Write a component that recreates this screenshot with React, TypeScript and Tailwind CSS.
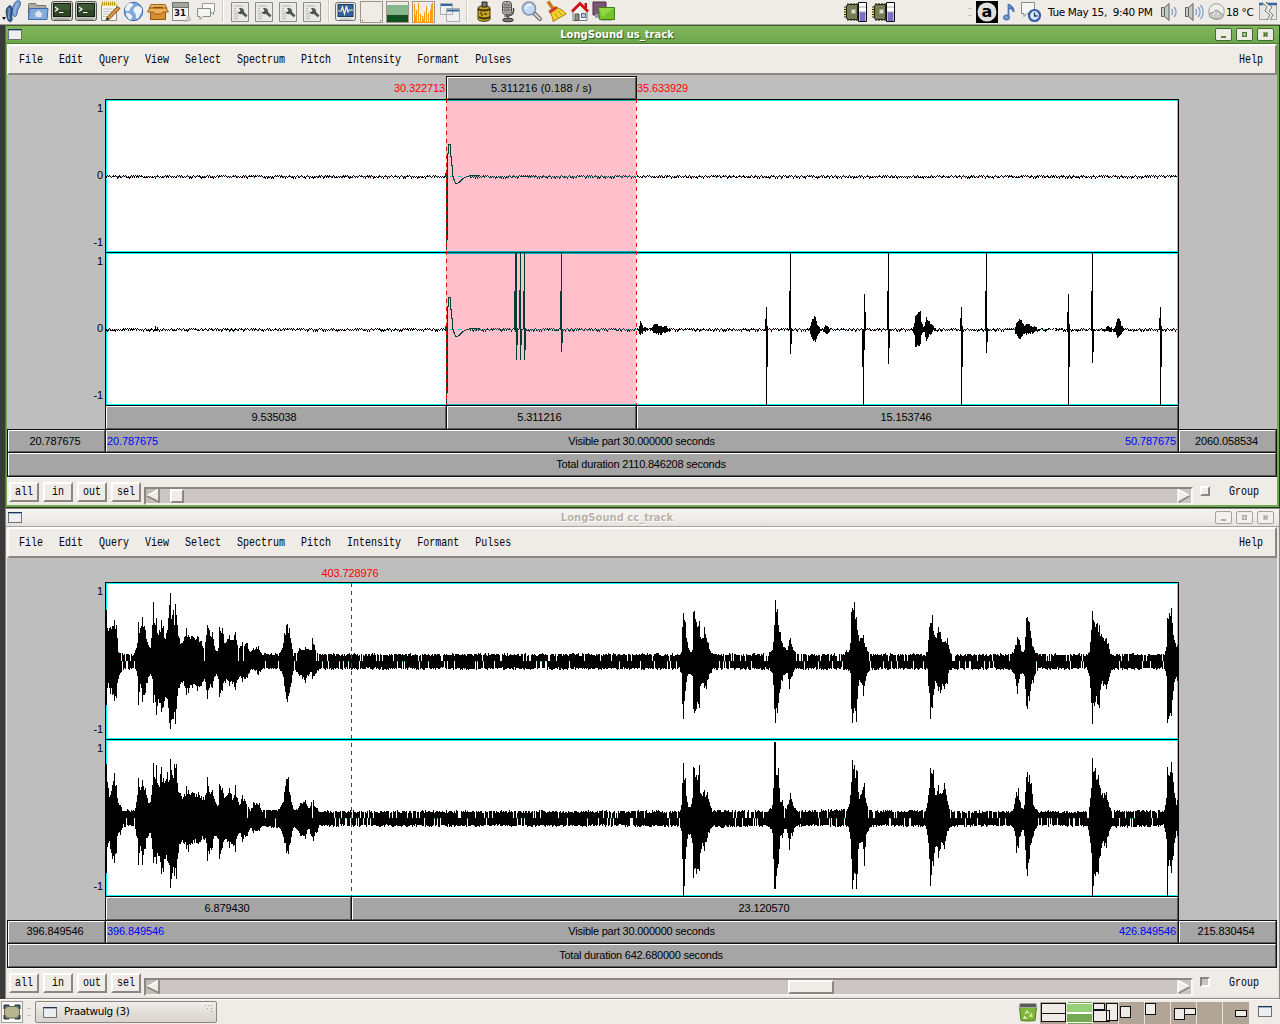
import React from "react";

type Key = [number, number, number];

/* ---------- waveform data: [x, height above axis, depth below axis] ---------- */

const CC_LEFT: Key[] = [
  [106, 51, 43], [107, 33, 26], [109, 33, 26], [110, 34, 32], [112, 35, 33], [114, 41, 39], [116, 36, 36], [117, 23, 21], [118, 9, 17], [121, 9, 10],
  [123, 6, 7], [133, 6, 7], [135, 11, 7], [137, 18, 14], [138, 39, 43], [140, 33, 22], [142, 44, 40], [145, 31, 31], [147, 19, 21],
  [150, 13, 12], [152, 36, 17], [153, 59, 41], [155, 36, 40], [156, 43, 53], [158, 26, 37], [161, 41, 50], [163, 35, 45], [164, 23, 39], [167, 31, 37],
  [169, 56, 61], [170, 68, 67], [171, 42, 58], [172, 46, 57], [173, 51, 57], [174, 36, 50], [175, 57, 62], [177, 36, 34], [179, 23, 26], [182, 18, 21],
  [184, 24, 24], [186, 33, 33], [188, 26, 31], [192, 25, 26], [197, 25, 29], [201, 20, 24], [204, 14, 17], [207, 36, 37], [209, 31, 26],
  [212, 29, 26], [215, 11, 14], [218, 13, 17], [219, 34, 35], [222, 33, 29], [225, 18, 21], [229, 26, 24], [232, 21, 22], [235, 29, 28],
  [238, 13, 17], [242, 19, 20], [247, 18, 16], [250, 8, 9], [253, 13, 7], [258, 15, 13], [262, 7, 7], [278, 6, 7], [282, 13, 12],
  [284, 28, 24], [286, 36, 37], [287, 37, 40], [289, 33, 31], [291, 18, 21], [293, 6, 9], [296, 8, 9], [299, 13, 14], [305, 14, 21],
  [308, 12, 14], [311, 11, 10], [312, 23, 17], [314, 16, 14], [317, 6, 9], [319, 6, 7], [679, 6, 7],
  [681, 9, 11], [682, 34, 42], [683, 48, 57], [685, 39, 29], [687, 19, 14], [690, 9, 12], [692, 11, 14], [693, 49, 47], [694, 50, 51],
  [696, 39, 47], [699, 40, 46], [700, 24, 24], [702, 23, 21], [704, 34, 26], [706, 23, 27], [708, 18, 17], [710, 8, 11], [713, 6, 7],
  [768, 6, 7], [770, 9, 9], [772, 11, 11], [774, 36, 47], [775, 61, 61], [776, 49, 46], [777, 52, 51], [779, 29, 31], [780, 29, 27],
  [782, 18, 19], [785, 13, 12], [787, 11, 11], [789, 21, 27], [790, 23, 17], [792, 14, 14], [795, 8, 7], [797, 6, 7], [844, 6, 7],
  [846, 11, 8], [848, 8, 8], [850, 18, 11], [851, 49, 47], [852, 53, 61], [854, 59, 46], [856, 44, 60], [858, 26, 24], [861, 23, 21],
  [863, 26, 34], [866, 14, 14], [868, 8, 11], [871, 6, 7], [925, 6, 7], [927, 9, 7], [928, 21, 24], [929, 34, 31], [930, 38, 57],
  [932, 46, 46], [934, 26, 27], [936, 23, 21], [938, 34, 29], [940, 29, 31], [943, 19, 24], [944, 19, 27], [947, 23, 22], [948, 16, 11],
  [951, 6, 7], [1010, 6, 7], [1012, 8, 9], [1015, 16, 17], [1017, 24, 32], [1019, 21, 17], [1022, 8, 11], [1024, 11, 14], [1026, 43, 44],
  [1027, 44, 47], [1029, 39, 39], [1031, 23, 22], [1033, 14, 21], [1036, 8, 9], [1038, 6, 7], [1087, 6, 7], [1089, 9, 14], [1090, 19, 26],
  [1092, 50, 62], [1094, 39, 44], [1097, 38, 42], [1099, 36, 46], [1101, 27, 22], [1103, 23, 24], [1106, 23, 27], [1108, 18, 19],
  [1110, 8, 11], [1112, 6, 7], [1164, 6, 7], [1166, 14, 14], [1167, 43, 61], [1169, 48, 54], [1171, 53, 54], [1173, 26, 29], [1175, 18, 17], [1177, 16, 19],
];

const CC_RIGHT: Key[] = [
  [106, 54, 54], [107, 36, 28], [108, 30, 24], [110, 23, 30], [112, 33, 40], [114, 45, 44], [116, 33, 34], [117, 20, 17], [120, 13, 16],
  [123, 7, 7], [134, 7, 7], [136, 16, 17], [137, 23, 19], [138, 40, 46], [140, 28, 27], [142, 38, 46], [145, 30, 30], [147, 20, 19],
  [150, 16, 14], [152, 33, 30], [153, 55, 44], [155, 39, 38], [156, 53, 45], [158, 33, 37], [161, 51, 55], [163, 40, 53], [165, 37, 40],
  [167, 46, 42], [168, 36, 44], [170, 59, 69], [172, 43, 54], [174, 54, 57], [176, 54, 60], [177, 35, 40], [180, 25, 25], [183, 21, 24],
  [186, 32, 30], [188, 28, 33], [192, 26, 25], [198, 26, 25], [203, 21, 20], [206, 25, 24], [207, 41, 42], [209, 26, 35], [212, 28, 29],
  [215, 16, 17], [218, 13, 20], [219, 34, 40], [222, 30, 29], [225, 21, 20], [229, 30, 29], [233, 20, 27], [235, 33, 33], [237, 20, 17],
  [239, 13, 14], [242, 23, 23], [247, 16, 17], [250, 8, 10], [253, 16, 14], [259, 15, 12], [262, 7, 7], [278, 8, 9], [282, 15, 15],
  [284, 26, 24], [286, 39, 34], [288, 41, 35], [290, 23, 24], [292, 13, 12], [295, 7, 9], [300, 15, 17], [305, 18, 20], [308, 10, 10],
  [311, 16, 17], [313, 18, 22], [316, 10, 14], [319, 6, 7], [679, 6, 7],
  [681, 13, 12], [682, 35, 40], [683, 55, 78], [684, 38, 67], [685, 40, 40], [687, 16, 20], [690, 11, 15], [692, 20, 24], [693, 51, 59],
  [694, 50, 50], [696, 43, 55], [698, 43, 50], [699, 53, 52], [700, 25, 34], [703, 26, 27], [704, 28, 32], [707, 26, 19], [709, 16, 14],
  [712, 7, 8], [768, 6, 7], [770, 10, 10], [772, 13, 14], [773, 30, 40], [774, 76, 70], [775, 76, 70], [776, 43, 57], [778, 50, 45],
  [779, 30, 30], [780, 16, 17], [782, 18, 19], [784, 10, 10], [787, 13, 14], [789, 18, 31], [790, 25, 20], [792, 16, 17], [795, 10, 8],
  [798, 6, 7], [846, 8, 7], [848, 11, 8], [850, 23, 20], [851, 36, 40], [852, 58, 70], [854, 53, 54], [856, 48, 70], [857, 47, 55],
  [858, 26, 30], [860, 23, 24], [863, 31, 30], [864, 35, 47], [866, 15, 15], [868, 10, 12], [871, 6, 7], [925, 7, 7], [928, 23, 24],
  [929, 30, 40], [930, 50, 67], [933, 48, 47], [934, 30, 34], [936, 23, 27], [938, 33, 39], [940, 25, 30], [942, 25, 24], [944, 35, 30],
  [946, 23, 17], [948, 13, 12], [952, 6, 7], [1011, 6, 7], [1013, 9, 9], [1015, 20, 17], [1016, 26, 34], [1018, 30, 29], [1020, 16, 17],
  [1022, 10, 11], [1024, 13, 17], [1026, 41, 50], [1027, 46, 57], [1029, 43, 40], [1031, 35, 24], [1033, 13, 17], [1036, 8, 8],
  [1038, 6, 7], [1087, 6, 7], [1089, 11, 17], [1090, 20, 24], [1091, 30, 34], [1092, 60, 78], [1093, 46, 67], [1095, 50, 57],
  [1098, 43, 55], [1100, 30, 37], [1102, 25, 24], [1104, 25, 27], [1106, 26, 29], [1108, 16, 17], [1111, 7, 8], [1163, 6, 7],
  [1166, 20, 20], [1167, 51, 77], [1168, 43, 47], [1170, 46, 47], [1171, 56, 54], [1173, 36, 37], [1175, 20, 19], [1176, 13, 12], [1177, 18, 17],
];

/* [x, top y, bottom y] single-column strokes of the second us_track channel */
const SPIKES: Key[] = [
  [514, 291, 329], [515, 253, 332], [516, 253, 360], [517, 329, 345], [519, 290, 329], [520, 253, 360], [521, 329, 345], [523, 291, 329],
  [524, 253, 360], [525, 329, 350], [560, 291, 329], [561, 253, 352], [562, 329, 343],
  [765, 319, 331], [766, 307, 405], [767, 326, 367], [789, 291, 330], [790, 253, 354], [791, 329, 344], [862, 329, 367], [863, 329, 405],
  [864, 294, 350], [865, 312, 331], [887, 291, 330], [888, 253, 364], [889, 329, 348], [960, 318, 330], [961, 307, 405], [962, 326, 367],
  [985, 291, 330], [986, 253, 353], [987, 329, 342], [1067, 312, 330], [1068, 294, 405], [1069, 324, 367], [1091, 291, 330],
  [1092, 253, 363], [1093, 329, 352], [1159, 318, 330], [1160, 307, 405], [1161, 326, 367],
];

const BLOBS: Key[] = [
  [638, 0, 1], [639, 5, 4], [640, 9, 6], [641, 6, 5], [643, 3, 3], [646, 1, 1], [651, 1, 1], [653, 5, 4], [655, 6, 5], [661, 4, 5],
  [666, 3, 3], [670, 1, 1], [671, 0, 0], [808, 0, 0], [810, 3, 4], [811, 9, 8], [813, 12, 11], [815, 14, 13], [817, 5, 6], [820, 1, 2],
  [822, 1, 1], [826, 5, 5], [830, 1, 1], [831, 0, 0], [912, 0, 0], [914, 7, 6], [915, 15, 17], [918, 17, 17], [920, 19, 16], [921, 8, 6], [923, 3, 3],
  [924, 4, 4], [926, 12, 11], [929, 8, 6], [933, 3, 2], [937, 0, 0], [1014, 0, 0], [1015, 4, 4], [1017, 8, 7], [1020, 11, 11], [1022, 8, 6],
  [1024, 4, 5], [1028, 6, 5], [1031, 3, 3], [1033, 4, 5], [1037, 1, 0], [1101, 0, 0], [1104, 1, 2], [1108, 4, 3], [1112, 1, 2], [1115, 3, 3],
  [1117, 12, 10], [1119, 11, 7], [1121, 5, 4], [1124, 0, 0],
];

/* ---------- helpers ---------- */

function makeRandom(seed: number) {
  let s = seed;
  return () => {
    s = (s * 1664525 + 1013904223) % 4294967296;
    return s / 4294967296;
  };
}

function sample(keys: Key[], x: number): [number, number] {
  if (x < keys[0][0] || x > keys[keys.length - 1][0]) return [0, 0];
  let i = 0;
  while (i < keys.length - 2 && keys[i + 1][0] <= x) i++;
  const a = keys[i];
  const b = keys[i + 1];
  const t = (x - a[0]) / (b[0] - a[0]);
  return [a[1] + (b[1] - a[1]) * t, a[2] + (b[2] - a[2]) * t];
}

function bar(x: number, top: number, bottom: number) {
  return `M${x} ${top}h1V${bottom}h-1z`;
}

function densePath(keys: Key[], mid: number, seed: number) {
  const rnd = makeRandom(seed);
  const peaks = new Set(keys.map((k) => k[0]));
  let d = "";
  for (let x = 106; x <= 1177; x++) {
    const [u, w] = sample(keys, x);
    const quiet = u < 9;
    const dip = peaks.has(x) ? 0 : 0.22;
    let up = u + (quiet ? rnd() * 2.6 - 0.9 : -rnd() * u * dip);
    let down = w + (quiet ? rnd() * 2.6 - 1.6 : -rnd() * w * dip);
    const r = rnd();
    if (quiet) {
      if (r < 0.09) up = 0;
      else if (r < 0.18) down = -1;
    } else if (u < 20 && r < 0.06) up = 0;
    d += bar(x, Math.round(mid - up), Math.round(mid + 1 + down));
  }
  return d;
}

function hum(from: number, to: number, mid: number, seed: number) {
  const rnd = makeRandom(seed);
  let d = "";
  for (let x = from; x < to; x++) {
    const tall = rnd() < 0.36;
    const y = x % 2 === 0 ? mid : mid + (rnd() < 0.55 ? 1 : -1);
    d += bar(x, y, y + (tall ? 2 : 1));
  }
  return d;
}

const inPink = (x: number) => x >= 447 && x < 636;
const spikeData = (pink: boolean) => SPIKES.filter(([x]) => inPink(x) === pink).map(([x, a, b]) => bar(x, a, b)).join("");

function blobData() {
  const rnd = makeRandom(9);
  let d = "";
  for (let x = 638; x < 1125; x++) {
    const [u, w] = sample(BLOBS, x);
    if (u > 0.6 || w > 0.6) d += bar(x, Math.round(329 - u + rnd() * 2), Math.round(330 + w - rnd() * 2));
  }
  return d;
}

const US = {
  left1: hum(106, 446, 176, 3), pink1: hum(470, 636, 176, 5), right1: hum(637, 1177, 176, 7),
  left2: hum(106, 446, 329, 11), pink2: hum(470, 636, 329, 13), right2: hum(637, 1177, 329, 17),
};

function Transient({ dy }: { dy: number }) {
  return (
    <g transform={`translate(0 ${dy})`}>
      <path d="M445 173h1v4h-1zM446 170h1V250h-1zM447 165h1V240h-1z" fill="#003f35" />
      <path
        d="M447.5 168V158L448.5 150L449 144.5H450L450.5 150L451.5 163L452.5 168L453 177L455.5 183.5H457.5L460.5 181L464.5 177.5L470.5 175.5H480"
        fill="none" stroke="#003f35" strokeWidth="1.1"
      />
    </g>
  );
}

function UsPlot() {
  return (
    <svg className="block h-[307px] w-[1074px]" viewBox="105 99 1074 307" shapeRendering="crispEdges">
      <rect x="105" y="99" width="1074" height="307" fill="#fff" />
      <rect x="446" y="100" width="190" height="305" fill="#ffc0cb" />
      <path d="M106 100.5H1178M106 251.5H1178M106 253.5H1178M106 404.5H1178M106.5 100V405M1177.5 100V405" stroke="#00ffff" fill="none" />
      <path d="M447 100.5H636M447 251.5H636M447 253.5H636M447 404.5H636" stroke="#00b8bd" fill="none" />
      <path d="M106 176.5H1177M106 329.5H1177" stroke="#00d8d8" strokeDasharray="4 4" fill="none" />
      <path d="M105.5 99V406M1178.5 99V406M105 99.5H1179M105 252.5H1179M105 405.5H1179" stroke="#000" fill="none" />
      <path d="M447 252.5H636" stroke="#00403f" />
      <path d={US.left1 + US.right1 + US.left2 + US.right2 + spikeData(false) + blobData()} fill="#000" />
      <path d={US.pink1 + US.pink2 + spikeData(true)} fill="#003f35" />
      <path d="M155 326h1v5h-1zM157 327h1v4h-1z" fill="#000" />
      <Transient dy={0} />
      <Transient dy={153} />
      <path d="M446.5 99V405M636.5 99V405" stroke="#ff0000" strokeDasharray="4 4" fill="none" />
    </svg>
  );
}

function CcPlot() {
  return (
    <svg className="block h-[315px] w-[1074px]" viewBox="105 582 1074 315" shapeRendering="crispEdges">
      <rect x="105" y="582" width="1074" height="315" fill="#fff" />
      <path d="M106 583.5H1178M106 738.5H1178M106 740.5H1178M106 895.5H1178M106.5 583V896M1177.5 583V896" stroke="#00ffff" fill="none" />
      <path d="M106 661.5H1177M106 818.5H1177" stroke="#00e0e0" strokeDasharray="4 4" fill="none" />
      <path d={densePath(CC_LEFT, 661, 21)} fill="#000" />
      <path d={densePath(CC_RIGHT, 818, 42)} fill="#000" />
      <path d="M105.5 582V897M1178.5 582V897M105 582.5H1179M105 739.5H1179M105 896.5H1179" stroke="#000" fill="none" />
      <path d="M351.5 583V896" stroke="#d40000" strokeDasharray="4 4" fill="none" />
    </svg>
  );
}

/* ---------- Motif widgets ---------- */

const MONO = "font-['Liberation_Mono',monospace] text-[10px] leading-[12px] text-black";
const SANS = "font-['Liberation_Sans',sans-serif] text-[11px] leading-[13px] tracking-[-0.1px]";

function Mono({ children }: { children: React.ReactNode }) {
  return <span className={`${MONO} inline-block scale-y-[1.28] whitespace-pre`}>{children}</span>;
}

function Cell({ className = "", children }: { className?: string; children?: React.ReactNode }) {
  return (
    <div className={`flex border-r border-[#101010] ${className}`}>
      <div className={`flex flex-1 items-center justify-center border border-t-white border-l-white border-r-[#5a5a5a] border-b-[#5a5a5a] bg-[#a5a5a5] whitespace-nowrap ${SANS}`}>
        {children}
      </div>
    </div>
  );
}

function MenuBar() {
  const items = ["File", "Edit", "Query", "View", "Select", "Spectrum", "Pitch", "Intensity", "Formant", "Pulses"];
  return (
    <div className="flex h-[31px] items-center justify-between border-2 border-t-white border-r-[#8b8682] border-b-[#8b8682] border-l-[#fbfaf9] bg-[#efebe7] pt-[1px] pr-3 pl-[10px]">
      <div className="flex gap-4">
        {items.map((t) => <Mono key={t}>{t}</Mono>)}
      </div>
      <Mono>Help</Mono>
    </div>
  );
}

function PushButton({ label }: { label: string }) {
  return (
    <div className="flex h-5 w-[30px] items-center justify-center border-2 border-t-white border-r-[#8b8682] border-b-[#8b8682] border-l-white bg-[#efebe7]">
      <Mono>{label}</Mono>
    </div>
  );
}

function Footer({ thumbLead, thumbWidth, checked }: { thumbLead: string; thumbWidth: string; checked: boolean }) {
  return (
    <div className="flex h-7 border-t border-white bg-[#efebe7] pl-[1px]">
      <div className="mt-1 flex gap-1 pl-[1px]">
        <PushButton label="all" /><PushButton label="in" /><PushButton label="out" /><PushButton label="sel" />
      </div>
      <div className="mt-[9px] ml-[3px] flex h-[18px] w-[1049px] border-2 border-t-[#8b8682] border-r-[#fbfaf9] border-b-[#f4f1ee] border-l-[#8b8682] bg-[#cbc6c3]">
        <svg className="h-[14px] w-[14px]" viewBox="0 0 14 14">
          <path d="M0 0h14v14H0z" fill="#c2bdba" />
          <path d="M12.5 0V13.5L1 7z" fill="#efebe7" />
          <path d="M12.5 .5L1 7" stroke="#fff" strokeWidth="1.5" />
          <path d="M1 7l12 6V0" stroke="#8b8682" strokeWidth="1.8" fill="none" />
        </svg>
        <div className={`${thumbLead} ${thumbWidth} h-[14px] border-2 border-t-white border-r-[#8b8682] border-b-[#8b8682] border-l-white bg-[#efebe7]`} />
        <svg className="ml-auto h-[14px] w-[14px]" viewBox="0 0 14 14">
          <path d="M1 0V13.5L12.5 7z" fill="#efebe7" />
          <path d="M1.2 14V.8L12 6.5" stroke="#fff" strokeWidth="1.8" fill="none" />
          <path d="M12.5 7L1.5 13.2" stroke="#8b8682" strokeWidth="1.8" />
        </svg>
      </div>
      <div className={checked
        ? "mt-2 ml-[7px] h-[10px] w-[10px] border-2 border-t-[#8b8682] border-r-white border-b-white border-l-[#8b8682] bg-[#cbc6c3]"
        : "mt-2 ml-[7px] h-[10px] w-[10px] border-2 border-t-white border-r-[#8b8682] border-b-[#8b8682] border-l-white bg-[#efebe7]"} />
      <div className="mt-2 ml-[19px] flex items-start"><Mono>Group</Mono></div>
    </div>
  );
}

function TitleButtons({ active }: { active: boolean }) {
  const box = active
    ? "h-[13px] w-[17px] rounded-[2px] border border-[#3f6b2d] bg-[#efebe7]"
    : "h-[13px] w-[17px] rounded-[2px] border border-[#a8a29c] bg-[#f3f0ed]";
  const ink = active ? "#50803c" : "#b3aca5";
  return (
    <div className="flex gap-1">
      <svg className={box} viewBox="0 0 15 11"><path d="M5 7h5v2H5z" fill={ink} /></svg>
      <svg className={box} viewBox="0 0 15 11"><path d="M5.75 3.75h3.5v3.5h-3.5z" fill="none" stroke={ink} strokeWidth="1.5" /></svg>
      <svg className={box} viewBox="0 0 15 11"><path d="M5.5 3.5l4 4m0-4l-4 4" stroke={ink} strokeWidth="2" /></svg>
    </div>
  );
}

function MiniWindow({ className = "" }: { className?: string }) {
  return (
    <svg className={`block h-[11px] w-[14px] ${className}`} viewBox="0 0 14 11" shapeRendering="crispEdges">
      <rect x=".5" y=".5" width="13" height="10" fill="#eceef0" stroke="#6d7278" />
      <path d="M0 .5h14" stroke="#20344e" />
      <path d="M1 1.5h12" stroke="#9bb0ca" />
    </svg>
  );
}

function TitleBar({ title, active }: { title: string; active: boolean }) {
  return (
    <div className={active
      ? "relative flex h-[19px] items-center justify-between border-t border-b border-t-[#3c5f2c] border-b-[#4b8033] bg-linear-to-b from-[#7fb65c] via-[#79b056] to-[#6da34c] pr-[5px] pl-[2px]"
      : "relative flex h-[19px] items-center justify-between border-t border-b border-t-[#8b8682] border-b-[#a8a29c] bg-linear-to-b from-[#f5f3f1] via-[#f1eeeb] to-[#e6e0da] pr-[5px] pl-[2px]"}>
      <MiniWindow />
      <span className={active
        ? "absolute top-[1px] right-[51px] left-0 text-center font-['DejaVu_Sans',sans-serif] text-[10px] leading-[15px] font-bold text-white [text-shadow:1px_1px_1px_#2f5620]"
        : "absolute top-[1px] right-[51px] left-0 text-center font-['DejaVu_Sans',sans-serif] text-[10px] leading-[15px] font-bold text-[#b9b2aa] [text-shadow:1px_1px_0_#fff]"}>
        {title}
      </span>
      <TitleButtons active={active} />
    </div>
  );
}

function UsWindow() {
  return (
    <section className="h-[483px] w-[1275px] border-r border-b border-l border-l-[#4b8033] border-r-[#1f3a14] border-b-[#1f3a14] bg-[#73a952]">
      <TitleBar title="LongSound us_track" active />
      <div className="ml-[1px] flex w-[1270px] flex-col bg-[#bebebe]">
        <MenuBar />
        <div className={`flex h-6 items-end ${SANS}`}>
          <div className="w-[438px] pb-[4px] text-right text-[#ff0000]">30.322713</div>
          <div className="ml-[1px] flex h-[23px] w-[191px] border-t border-l border-[#101010]">
            <Cell className="flex-1"><span className="tracking-[0.16px]">5.311216 (0.188 / s)</span></Cell>
          </div>
          <div className="pb-[4px] text-[#ff0000]">35.633929</div>
        </div>
        <div className="flex h-[307px]">
          <div className={`flex w-[98px] flex-col pr-[2px] text-right ${SANS}`}>
            <span className="mt-[3px]">1</span>
            <span className="mt-[54px]">0</span>
            <span className="mt-[54px]">-1</span>
            <span className="mt-[6px]">1</span>
            <span className="mt-[54px]">0</span>
            <span className="mt-[54px]">-1</span>
          </div>
          <UsPlot />
        </div>
        <div className="ml-[98px] flex h-[23px] w-[1074px] border-l border-[#101010]">
          <Cell className="w-[341px]"><span className="pr-1">9.535038</span></Cell>
          <Cell className="w-[190px]"><span className="pr-1">5.311216</span></Cell>
          <Cell className="flex-1"><span className="pr-[3px]">15.153746</span></Cell>
        </div>
        <div className="flex h-6 border-y border-l border-[#101010]">
          <Cell className="w-[98px]"><span className="pr-[3px]">20.787675</span></Cell>
          <Cell className="w-[1073px]">
            <div className="grid flex-1 grid-cols-3 pr-[1px]">
              <span className="text-[#0000ff]">20.787675</span>
              <span className="text-center tracking-[-0.23px]">Visible part 30.000000 seconds</span>
              <span className="text-right text-[#0000ff]">50.787675</span>
            </div>
          </Cell>
          <Cell className="flex-1"><span className="pr-[2px]">2060.058534</span></Cell>
        </div>
        <div className="flex h-6 border-b border-l border-[#101010]">
          <Cell className="flex-1"><span className="pr-[2px] tracking-[-0.21px]">Total duration 2110.846208 seconds</span></Cell>
        </div>
        <Footer thumbLead="ml-[10px]" thumbWidth="w-[14px]" checked={false} />
      </div>
    </section>
  );
}

function CcWindow() {
  return (
    <section className="h-[491px] w-[1275px] border-r border-b border-l border-[#8b8682] bg-[#e9e5e1]">
      <TitleBar title="LongSound cc_track" active={false} />
      <div className="ml-[1px] flex w-[1270px] flex-col bg-[#bebebe]">
        <MenuBar />
        <div className={`flex h-6 items-end ${SANS}`}>
          <div className="w-[686px] pb-[2px] text-center text-[#ff0000]">403.728976</div>
        </div>
        <div className="flex h-[315px]">
          <div className={`flex w-[98px] flex-col pr-[2px] text-right ${SANS}`}>
            <span className="mt-[3px]">1</span>
            <span className="mt-[125px]">-1</span>
            <span className="mt-[6px]">1</span>
            <span className="mt-[125px]">-1</span>
          </div>
          <CcPlot />
        </div>
        <div className="ml-[98px] flex h-[23px] w-[1074px] border-l border-[#101010]">
          <Cell className="w-[246px]"><span className="pr-[3px]">6.879430</span></Cell>
          <Cell className="flex-1"><span className="pr-[2px]">23.120570</span></Cell>
        </div>
        <div className="flex h-6 border-y border-l border-[#101010]">
          <Cell className="w-[98px]"><span className="pr-[3px] pb-[2px]">396.849546</span></Cell>
          <Cell className="w-[1073px]">
            <div className="grid flex-1 grid-cols-3 pr-[1px] pb-[2px]">
              <span className="text-[#0000ff]">396.849546</span>
              <span className="text-center tracking-[-0.23px]">Visible part 30.000000 seconds</span>
              <span className="text-right text-[#0000ff]">426.849546</span>
            </div>
          </Cell>
          <Cell className="flex-1"><span className="pr-[3px] pb-[2px]">215.830454</span></Cell>
        </div>
        <div className="flex h-6 border-b border-l border-[#101010]">
          <Cell className="flex-1"><span className="pr-[2px] tracking-[-0.23px]">Total duration 642.680000 seconds</span></Cell>
        </div>
        <Footer thumbLead="ml-[628px]" thumbWidth="w-[46px]" checked />
      </div>
    </section>
  );
}

/* ---------- desktop panel icons ---------- */

function Icon({ children, w = 24 }: { children: React.ReactNode; w?: number }) {
  return (
    <svg className="block h-6 shrink-0" width={w} viewBox={`0 0 ${w} 24`}>
      {children}
    </svg>
  );
}

function Divider() {
  return <div className="mx-1 h-[22px] w-[2px] shrink-0 border-r border-l border-r-white border-l-[#d0cac4]" />;
}

const Foot = () => (
  <Icon>
    <path d="M0 17h4l-2 3z" fill="#111" />
    <path d="M14 2c4-2 5 0 4 4-1 3-3 4-3 8 0 3-3 4-4 2-2-4 0-11 3-14z" fill="#7ba3d6" stroke="#3a6299" transform="translate(0 -.5)" />
    <path d="M5 8c3-4 5-2 5 1 0 4-1 6 0 9 1 4-3 5-4 2C5 17 3 12 5 8z" fill="#345e94" stroke="#24466f" />
    <path d="M7 8c1 3-1 6 0 11M15 4c-1 3-3 6-2 10" stroke="#a5c2e6" fill="none" />
  </Icon>
);
const Folder = () => (
  <Icon>
    <path d="M2.5 19V4.500q0-1 1-1h6l1 2h8.500q1 0 1 1V19z" fill="#a9aca7" stroke="#6d706b" />
    <path d="M3.500 8.500H22l-1 11H2.500z" fill="#83abdc" stroke="#3c6ca8" />
    <path d="M8 14.500L12.500 10l4.500 4.500h-1.500V17h-6v-2.500z" fill="#dfe6ee" />
  </Icon>
);
const Terminal = () => (
  <Icon>
    <rect x="1.500" y="1.500" width="21" height="19" rx="2" fill="#c9cac7" stroke="#555753" />
    <rect x="3.500" y="3.500" width="17" height="13" fill="#2c4423" stroke="#141c10" />
    <path d="M4 5h16M4 7h16M4 9h16" stroke="#4d7040" />
    <path d="M5 7l3 2.200-3 2.200M9 12.500h4.500" stroke="#fff" strokeWidth="1.200" fill="none" />
    <path d="M4 19h15" stroke="#888a85" />
  </Icon>
);
const Notes = () => (
  <Icon>
    <path d="M3.500 3.500h15v17h-15z" fill="#f5f5f2" stroke="#8a8d87" />
    <path d="M5 9h12M5 11.500h12M5 14h10M5 16.500h10" stroke="#c1c3be" />
    <path d="M3 3h16v2.500H3z" fill="#e4d263" />
    <path d="M4.500 1.500v4M6.500 1.500v4M8.500 1.500v4M10.500 1.500v4M12.500 1.500v4M14.500 1.500v4M16.500 1.500v4" stroke="#c09c14" />
    <path d="M9 17.500L19.500 6.500l2.500 2L11.500 19l-3.500 1z" fill="#e09a3c" stroke="#7a4b11" />
    <path d="M8 20l1.300-2.800 2 2z" fill="#222" />
  </Icon>
);
const Globe = () => (
  <Icon>
    <circle cx="11.500" cy="11.500" r="9.200" fill="#7fa8dc" stroke="#3a68a6" />
    <path d="M5 5c3-3 6-2 6 0s-3 2-3 4-3 3-5 1c0-2 1-4 2-5zM12 8c3-3 7-2 8 1 0 4-2 5-3 8-2 3-4 1-3-2 0-2-4-3-2-7zM4 13c3-1 5 2 6 3s-1 3-1 4c-3-1-5-4-5-7z" fill="#eef4fb" />
  </Icon>
);
const Box = () => (
  <Icon>
    <path d="M5 4.500h14l2 4H3z" fill="#f0b765" stroke="#9c6010" />
    <path d="M4.500 11h15v8.500h-15z" fill="#d88f30" stroke="#8f560b" />
    <path d="M1.500 12L4 8h16l2.500 4h-6l-1 2H8.500l-1-2z" fill="#efb25a" stroke="#9c6010" />
    <path d="M7 7.500h10" stroke="#8a5208" strokeWidth="1.500" />
  </Icon>
);
const Calendar = () => (
  <Icon>
    <path d="M2.500 2.500h16v18h-16z" fill="#f3f3f1" stroke="#888a85" />
    <path d="M2.500 2.500h16v5h-16z" fill="#a3a5a0" stroke="#6d706b" />
    <path d="M18.500 15c1 4 3 4 2 5-2 1-5 1-7 1 3-1 4-2 4-4z" fill="#d5d6d3" stroke="#999" strokeWidth=".7" />
    <text x="4" y="15.500" fontFamily="DejaVu Sans" fontWeight="bold" fontSize="8" fill="#111" textLength="12" lengthAdjust="spacingAndGlyphs">31</text>
  </Icon>
);
const Chat = () => (
  <Icon>
    <path d="M8.500 3.500h12v8h-1v3l-3-3h-8z" fill="#fafafa" stroke="#9a9c98" />
    <path d="M3.500 8.500h13v8H9l-3 3v-3H3.500z" fill="#f4f4f3" stroke="#888a85" />
  </Icon>
);
const Wrench = () => (
  <Icon>
    <path d="M3.500 2.500h17v19h-17z" fill="#e9eae8" stroke="#8b8d89" />
    <path d="M6 6h9M6 8.500h2M6 11h2M6 13.500h5M6 16h5M6 18.500h4" stroke="#b3b5b1" />
    <path d="M11 8.500c2-1 5 0 5 2.500 0 1 0 1 1 2l2.500 2.500-1.800 1.800L14 14c-2 .5-4-.5-4.500-2.500l2 .5 1-1.500z" fill="#50534e" />
  </Icon>
);
const SystemMonitor = () => (
  <Icon>
    <rect x="1.500" y="2.500" width="20" height="18" rx="2" fill="#e9e9e6" stroke="#6d706b" />
    <rect x="4" y="4.500" width="15" height="12" fill="#33609c" stroke="#1d3d69" />
    <path d="M4 11h3l1.500-4 2 7 2-8 1.500 6 1.500-2h3.500" stroke="#f5f8c8" strokeWidth="1.200" fill="none" />
    <path d="M6 19h11" stroke="#b0b2ad" />
  </Icon>
);
const Applets = () => (
  <Icon w={78}>
    <g shapeRendering="crispEdges">
      <path d="M2.500 1.500h22v21h-22zM28.500 1.500h22v21h-22zM54.500 1.500h22v21h-22z" fill="#efebe7" stroke="#a19488" />
      <path d="M4 20h1v1H4zM22 20h1v1h-1z" fill="#0a6a1f" />
      <path d="M29 2h21v3H29z" fill="#efebe7" />
      <path d="M29 5h21v10H29z" fill="#86b78a" />
      <path d="M29 15h21v7H29z" fill="#10501c" />
      <path d="M56.500 4V22M58.500 10V22M60.500 3V22M62.500 14V22M64.500 16V22M66.500 12V22M68.500 6V22M70.500 13V22M72.500 10V22M74.500 3V22M73.500 4V22M57.500 15V22M65.500 19V22" stroke="#ff9c0a" />
      <path d="M55 22h21" stroke="#ff9c0a" />
    </g>
  </Icon>
);
const WindowsIcon = () => (
  <Icon>
    <path d="M2.500 3.500h12v11h-12zM8.500 8.500h13v13h-13z" fill="#eff1f3" stroke="#a8abb0" />
    <path d="M3 5h11M9 10.500h12" stroke="#3565a0" strokeWidth="2" />
  </Icon>
);
const Can = () => (
  <Icon>
    <path d="M6 8c0-3 12-3 12 0v11c0 3-12 3-12 0z" fill="#c9a520" stroke="#3c3205" />
    <path d="M6 9c3 2 9 2 12 0M7 17c3 2 8 2 11 0" stroke="#3c3205" strokeWidth="2" fill="none" />
    <path d="M8 13h2m2 1h3M9 15h2" stroke="#5d4b06" strokeWidth="1.500" />
    <path d="M10 2h5v5h-5z" fill="#777" stroke="#222" />
  </Icon>
);
const Mic = () => (
  <Icon>
    <rect x="6.500" y="1.500" width="9" height="13" rx="3" fill="#c5c7c3" stroke="#454743" />
    <path d="M7 5h8M7 7.500h8M7 10h8M11 2v12M9 3v10M13 3v10" stroke="#666863" strokeWidth=".9" />
    <path d="M17.500 8c1 9-6 8-9 8M12 16v4" stroke="#454743" strokeWidth="1.500" fill="none" />
    <ellipse cx="12" cy="20" rx="5.500" ry="1.800" fill="#777" stroke="#333" />
  </Icon>
);
const Magnifier = () => (
  <Icon>
    <path d="M14 13l6 6" stroke="#666" strokeWidth="4" strokeLinecap="round" />
    <path d="M15 14l5 5" stroke="#d5d6d3" strokeWidth="2" strokeLinecap="round" />
    <circle cx="9" cy="8.500" r="6.500" fill="#c4d9f2" stroke="#7f93ab" strokeWidth="1.500" />
    <path d="M6 9c0-3 2-4 5-4" stroke="#fff" strokeWidth="1.500" fill="none" />
  </Icon>
);
const Broom = () => (
  <Icon>
    <path d="M4 1.500l5 7" stroke="#c67b1b" strokeWidth="3.500" />
    <path d="M5 11l7-4c5 2 8 4 10 7L9 21.500c0-3-1-6-4-10.500z" fill="#f2d02e" stroke="#a8830a" />
    <path d="M4.500 11l7.500-5 1.500 2.500-7 5z" fill="#cf3b27" />
    <path d="M11 13l3 5M14 11l4 4" stroke="#b99312" />
  </Icon>
);
const House = () => (
  <Icon>
    <path d="M5 11v9.500h14V11l-7-6z" fill="#f3f3f1" stroke="#777" />
    <path d="M16.500 3h2.500v5h-2.500z" fill="#c31414" />
    <path d="M4 11.500L12 3.500l8 8" stroke="#d01818" strokeWidth="3" fill="none" />
    <path d="M7 14h4v6.500H7z" fill="#8a8c88" stroke="#555" />
    <path d="M13.500 13.500h4v4h-4z" fill="#b9cfe8" stroke="#56657a" />
  </Icon>
);
const Displays = () => (
  <Icon>
    <path d="M1 2h13v13H1z" fill="#7b5478" stroke="#472c45" />
    <path d="M3 14h6v4H3z" fill="#9a9c98" />
    <path d="M6.500 7.500h16v12h-15z" fill="#73c42f" stroke="#3f7e12" />
    <path d="M7 8l15 0-12 9z" fill="#9be052" opacity=".7" />
    <path d="M9 20.500h11" stroke="#bbb" />
  </Icon>
);
const Cpu = () => (
  <Icon>
    <path d="M0 7.500h3v9H0z" fill="#e6e08a" />
    <path d="M0 7h3M0 9.500h3M0 12h3M0 14.500h3M0 17h3M4 3v18M7 3v18M10 3v18M13 3v18" stroke="#2e2e14" strokeWidth="1.200" />
    <path d="M2.500 6.500q0-2 2-2h9v15h-9q-2 0-2-2z" fill="#767b58" stroke="#24260f" />
    <path d="M7.500 9.500h4v4h-4z" fill="#d9dbcf" stroke="#a5a88f" />
    <path d="M14.500 2.500h8v19h-8z" fill="#fff" stroke="#111" />
    <path d="M15.500 12h6v9h-6z" fill="#7a70c6" />
    <path d="M15 7h7M15 12h7" stroke="#aaa" />
  </Icon>
);
const Alpha = () => (
  <Icon>
    <path d="M1 1h22v22H1z" fill="#000" />
    <circle cx="12" cy="12" r="9.500" fill="#e0e0e0" />
    <text x="12" y="17" textAnchor="middle" fontFamily="DejaVu Sans" fontWeight="bold" fontSize="16" fill="#000">a</text>
  </Icon>
);
const Note = () => (
  <Icon w={16}>
    <path d="M6.500 4v13M6.500 4c2 3 6 3 5 8 0-2-2-4-5-4" stroke="#4b76b1" strokeWidth="1.800" fill="none" />
    <ellipse cx="4.500" cy="17.500" rx="3" ry="2.500" fill="#6e98d0" stroke="#3c659e" />
  </Icon>
);
const ChatClock = () => (
  <Icon>
    <path d="M3.500 2.500h13v11H9l-3 3v-3H3.500z" fill="#f6f6f5" stroke="#888a85" />
    <circle cx="16.500" cy="15.500" r="5.500" fill="#dbe7f6" stroke="#2f5fa5" strokeWidth="2.200" />
    <path d="M16.500 12.500v3.500h3" stroke="#1d3d69" strokeWidth="1.300" fill="none" />
  </Icon>
);
const Speaker = ({ loud = false }: { loud?: boolean }) => (
  <Icon>
    <path d="M5.500 7.500h3l4.500-4v17l-4.500-4h-3z" fill="#c7c9c5" stroke="#5d605b" />
    <path d="M8.500 8v8" stroke="#5d605b" />
    <path d="M15.500 9c1.500 2 1.500 4 0 6M18 7c2.500 3 2.500 7 0 10" stroke="#7ea0cf" strokeWidth="1.300" fill="none" />
    {loud && <path d="M20.500 5c3.500 4 3.500 10 0 14" stroke="#7ea0cf" strokeWidth="1.300" fill="none" />}
  </Icon>
);
const Weather = () => (
  <Icon w={20}>
    <circle cx="10.500" cy="11.500" r="7.800" fill="#eeeeed" stroke="#9b9d99" />
    <path d="M4 17c-2-3 1-5 3-4 2-4 6-3 7 0 3 0 4 3 2 5-3 2-9 1-12-1z" fill="#c8cac7" stroke="#8f918d" />
    <path d="M7 15l2-3M11 15l2-2" stroke="#fff" />
  </Icon>
);
const Broken = () => (
  <Icon w={20}>
    <path d="M1.500 3.500h17v16h-17z" fill="#e6e7e5" stroke="#9fa19e" />
    <path d="M1 4h18" stroke="#3565a0" strokeWidth="2.500" />
    <path d="M5 2l6 6-4 3 6 4-2 5" stroke="#efebe7" strokeWidth="3" fill="none" />
    <path d="M4 2l5 5-2 4 5 4-3 5M8 2l6 5-3 4 4 4-3 5" stroke="#777" fill="none" />
  </Icon>
);

const PANEL_TEXT = "font-['DejaVu_Sans',sans-serif] text-[10.5px] leading-6 tracking-[-0.38px] text-black whitespace-pre shrink-0";

function TopPanel() {
  return (
    <header className="flex h-[25px] items-start border-b border-[#a89f97] bg-[#efebe7] pl-[2px]">
      <Foot /><Folder /><Terminal /><Terminal /><Notes /><Globe /><Box /><Calendar /><Chat />
      <Divider />
      <Wrench /><Wrench /><Wrench /><Wrench />
      <Divider />
      <SystemMonitor />
      <Applets />
      <div className="w-[2px]" />
      <WindowsIcon />
      <Divider />
      <Can /><Mic /><Magnifier /><Broom /><House /><Displays />
      <div className="ml-auto flex gap-1"><Cpu /><Cpu /></div>
      <div className="mt-2 ml-[72px] h-2 w-1 shrink-0 border-y border-[#cbc4bc]" />
      <div className="ml-[3px] flex w-[305px] shrink-0 items-start">
        <Alpha />
        <div className="ml-[3px]"><Note /></div>
        <ChatClock />
        <span className={`${PANEL_TEXT} ml-[6px] w-[108px]`}>Tue May 15,  9:40 PM</span>
        <Speaker />
        <Speaker loud />
        <div className="ml-[2px]"><Weather /></div>
        <span className={`${PANEL_TEXT} w-[32px]`}>18 °C</span>
        <Broken />
      </div>
    </header>
  );
}

function Pager() {
  return (
    <svg className="mt-[2px] block h-[22px] w-[209px]" viewBox="0 0 209 22" shapeRendering="crispEdges">
      <path d="M0 0h209v22H0z" fill="#b1a598" />
      <path d="M26 0h26v22H26z" fill="#fff" />
      <path d="M27 2h25v8H27z" fill="#98cf79" />
      <path d="M27 12h25v8H27z" fill="#73a952" />
      <path d="M28 .5h24M28 21.500h24" stroke="#73a952" />
      <path d="M26.500 0v22M52.500 0v22M78.500 0v22M104.500 0v22M130.500 0v22M156.500 0v22M182.500 0v22" stroke="#e8e2dc" />
      <path d="M1.500 1.500h24v18h-24zM1.500 11.500h24M53.500 1.500h11v6h-11zM66.500 1.500h11v17h-11zM53.500 8.500h16v11h-16zM80.500 4.500h10v11h-10zM105.500 1.500h10v11h-10zM144.500 6.500h11v6h-11zM134.500 6.500h10v11h-10zM195.500 8.500h11v6h-11z" fill="#efebe7" stroke="#111" />
    </svg>
  );
}

function BottomPanel() {
  return (
    <footer className="flex h-[25px] items-start border-t border-white bg-[#efebe7]">
      <svg className="mt-[1px] ml-[1px] block h-[22px] w-[22px]" viewBox="0 0 22 22">
        <rect x=".5" y=".5" width="21" height="21" fill="#fbfaf9" stroke="#a39c95" />
        <path d="M3 4h5v4H3zM14 4h5v4h-5zM3 14h5v4H3zM14 14h5v4h-5z" fill="#45577a" stroke="#27344e" />
        <path d="M6 5.500h10l2.500 3v5L16 17H6l-2.500-3.500v-5z" fill="#b6b58d" stroke="#6c6b4c" />
      </svg>
      <div className="mt-2 ml-1 h-2 w-1 border-y border-[#cbc4bc]" />
      <div className="mt-[1px] ml-1 flex h-[22px] w-[182px] items-center rounded-[2px] border border-[#8b8682] bg-linear-to-b from-[#f1efed] via-[#e3dfdb] to-[#d8d3ce] pl-[7px]">
        <MiniWindow />
        <span className="ml-[7px] font-['DejaVu_Sans',sans-serif] text-[10.500px] tracking-[-0.38px] text-black">Praatwulg (3)</span>
        <svg className="mr-[3px] mb-2 ml-auto block h-[7px] w-[8px]" viewBox="0 0 8 7" shapeRendering="crispEdges">
          <path d="M0 0h1v1H0zM3 0h1v1H3zM6 0h1v1H6zM2 3h1v1H2zM6 3h1v1H6zM6 6h1v1H6z" fill="#a19a93" />
        </svg>
      </div>
      <svg className="mt-[1px] mr-[2px] ml-auto block h-[21px] w-[20px]" viewBox="0 0 20 21">
        <path d="M1.500 6h17l-1.500 13.500q-7 1-14 0z" fill="#7fb53a" stroke="#4c7a17" />
        <path d="M2 2.500h16l1 4H1z" fill="#555b59" stroke="#a5a8a4" />
        <path d="M7 13l2-3 2 3M13 12l1 3h-3M9 17H6l1-2" stroke="#d9efb4" strokeWidth="1.300" fill="none" />
      </svg>
      <Pager />
      <MiniWindow className="mt-[6px] mr-2 ml-[9px]" />
    </footer>
  );
}

export default function App() {
  return (
    <div className="flex h-[1024px] w-[1280px] flex-col overflow-hidden bg-[#3a3a3a]">
      <TopPanel />
      <main className="flex h-[974px] flex-col pl-[5px]">
        <UsWindow />
        <CcWindow />
      </main>
      <BottomPanel />
    </div>
  );
}
